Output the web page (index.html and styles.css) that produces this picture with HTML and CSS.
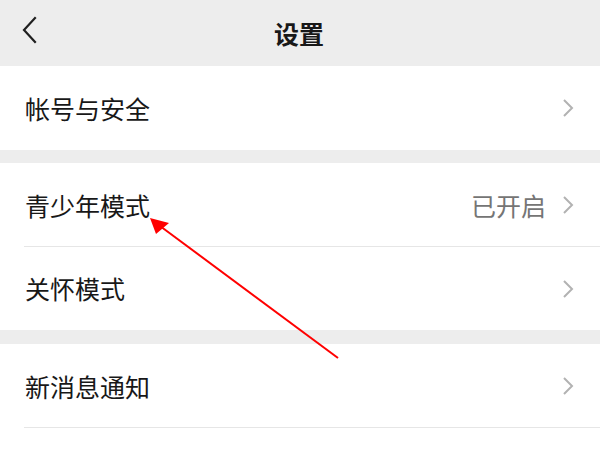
FILE: index.html
```
<!DOCTYPE html>
<html lang="zh">
<head>
<meta charset="utf-8">
<link rel="stylesheet" href="styles.css">
</head>
<body>
<div class="page">
  <header class="topbar">
    <svg class="back" width="20" height="30" viewBox="0 0 20 30"><path d="M14 2 L3 14 L14 26" fill="none" stroke="#1f1f1f" stroke-width="2.2" stroke-linecap="square"/></svg>
    <div class="title">设置</div>
  </header>
  <section class="group">
    <div class="row first"><span class="label">帐号与安全</span><span class="right"><svg class="chev" width="12" height="20" viewBox="0 0 12 20"><path d="M2 2 L10 10 L2 18" fill="none" stroke="#b2b2b2" stroke-width="2"/></svg></span></div>
  </section>
  <div class="gap"></div>
  <section class="group">
    <div class="row line"><span class="label">青少年模式</span><span class="right"><span class="value">已开启</span><svg class="chev" width="12" height="20" viewBox="0 0 12 20"><path d="M2 2 L10 10 L2 18" fill="none" stroke="#b2b2b2" stroke-width="2"/></svg></span></div>
    <div class="row"><span class="label">关怀模式</span><span class="right"><svg class="chev" width="12" height="20" viewBox="0 0 12 20"><path d="M2 2 L10 10 L2 18" fill="none" stroke="#b2b2b2" stroke-width="2"/></svg></span></div>
  </section>
  <div class="gap gap2"></div>
  <section class="group">
    <div class="row line"><span class="label">新消息通知</span><span class="right"><svg class="chev" width="12" height="20" viewBox="0 0 12 20"><path d="M2 2 L10 10 L2 18" fill="none" stroke="#b2b2b2" stroke-width="2"/></svg></span></div>
  </section>
  <svg class="arrow" width="600" height="450" viewBox="0 0 600 450">
    <line x1="338" y1="358" x2="160" y2="226" stroke="#ff0000" stroke-width="2"/>
    <polygon points="150,218 169,223 156,234" fill="#ff0000"/>
  </svg>
</div>
</body>
</html>
```
FILE: styles.css
```
* { box-sizing: border-box; }
html, body { margin: 0; padding: 0; }
body {
  width: 600px;
  height: 450px;
  overflow: hidden;
  background: #ffffff;
  font-family: "Noto Sans CJK SC", "Noto Sans", sans-serif;
  color: #181818;
}
.page { position: relative; width: 600px; height: 450px; }
.topbar {
  height: 66px;
  background: #ededed;
  display: flex;
  align-items: center;
  justify-content: center;
  position: relative;
}
.back { position: absolute; left: 21px; top: 16px; }
.title { font-size: 25px; font-weight: 700; color: #181818; line-height: 1; margin-left: -2px; }
.group { background: #fff; }
.row {
  height: 83px;
  display: flex;
  align-items: center;
  justify-content: space-between;
  padding-left: 25px;
  padding-right: 26px;
  position: relative;
}
.row.first { height: 84px; }
.row.line { height: 84px; }
.row.line::after {
  content: "";
  position: absolute;
  left: 24px;
  right: 0;
  bottom: 0;
  height: 1px;
  background: #e6e6e6;
}
.label { font-size: 25px; line-height: 1; }
.right { display: flex; align-items: center; gap: 16px; }
.value { font-size: 25px; color: #757575; line-height: 1; }
.chev { display: block; }
.gap { height: 13px; background: #ededed; }
.gap2 { height: 14px; }
.arrow { position: absolute; left: 0; top: 0; }
```
